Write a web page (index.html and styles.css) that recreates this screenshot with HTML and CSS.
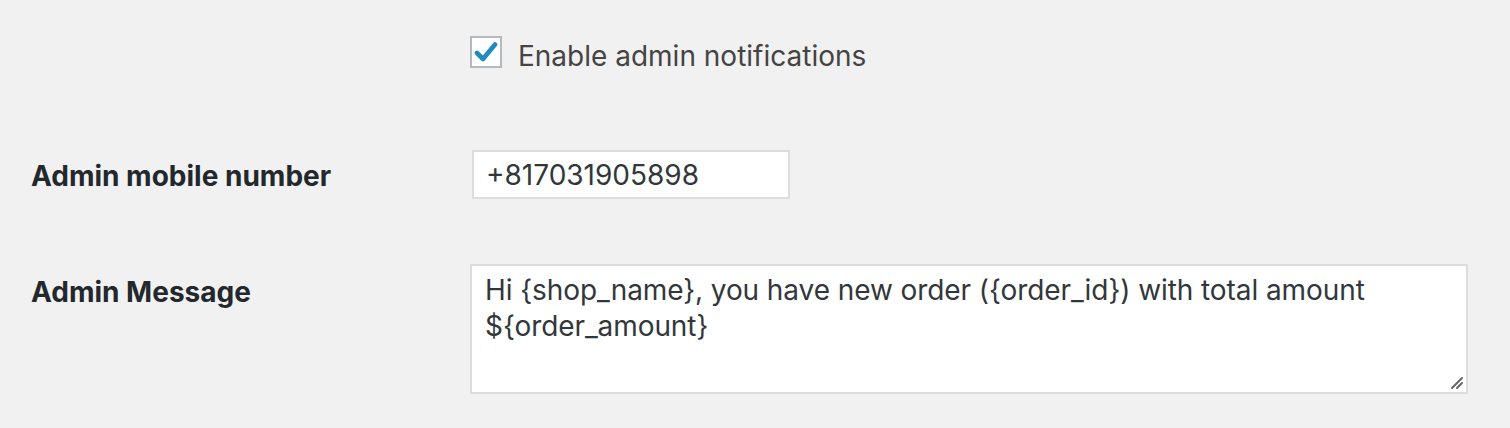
FILE: index.html
```html
<!DOCTYPE html>
<html>
<head>
<meta charset="utf-8">
<link rel="stylesheet" href="styles.css">
</head>
<body>
<div class="form">
  <div class="row row-check">
    <div class="th"></div>
    <label class="check">
      <span class="box">
        <svg width="24" height="22" viewBox="0 0 24 22"><path d="M3 12 L9 18 L21 3.5" fill="none" stroke="#1e8cbe" stroke-width="4.6" stroke-linecap="round" stroke-linejoin="round"/></svg>
      </span>
      <span class="check-text">Enable admin notifications</span>
    </label>
  </div>
  <div class="row row-input">
    <div class="th">Admin mobile number</div>
    <div class="input">+817031905898</div>
  </div>
  <div class="row row-area">
    <div class="th th-top">Admin Message</div>
    <div class="textarea">
      <div class="area-text">Hi {shop_name}, you have new order ({order_id}) with total amount<br>${order_amount}</div>
      <svg class="grip" width="14" height="14" viewBox="0 0 14 14"><path d="M2 12 L12 2 M7 12 L12 7" stroke="#666" stroke-width="2" stroke-linecap="round"/></svg>
    </div>
  </div>
</div>
</body>
</html>
```
FILE: styles.css
```css
html, body {
  margin: 0;
  padding: 0;
  background: #f1f1f1;
}
body {
  width: 1510px;
  height: 428px;
  overflow: hidden;
  font-family: Inter, "Liberation Sans", sans-serif;
}
.form {
  padding-left: 31px;
}
.row {
  display: flex;
}
.th {
  width: 439px;
  flex: none;
  font-weight: 700;
  font-size: 28px;
  color: #23282d;
}
.row-check {
  padding-top: 36px;
  height: 32px;
}
.check {
  display: flex;
  align-items: center;
  gap: 16px;
}
.box {
  width: 28px;
  height: 28px;
  border: 2px solid #b4b9be;
  background: #fff;
  box-sizing: content-box;
  display: flex;
  align-items: center;
  justify-content: center;
}
.check-text {
  font-size: 28px;
  color: #444;
  padding-top: 7px;
}
.row-input {
  margin-top: 82px;
  align-items: center;
}
.row-input .th {
  padding-top: 3px;
}
.input {
  margin-left: 2px;
  border: 2px solid #ddd;
  background: #fff;
  font-size: 28px;
  color: #32373c;
  display: flex;
  align-items: center;
  padding-left: 12px;
  box-sizing: border-box;
  width: 318px;
  height: 49px;
}
.row-area {
  margin-top: 65px;
}
.th-top {
  padding-top: 11px;
}
.textarea {
  position: relative;
  width: 998px;
  height: 130px;
  box-sizing: border-box;
  border: 2px solid #ddd;
  background: #fff;
  padding: 6px 13px;
  font-size: 28px;
  line-height: 36px;
  letter-spacing: -0.08px;
  color: #32373c;
}
.grip {
  position: absolute;
  right: 2px;
  bottom: 2px;
}
```
